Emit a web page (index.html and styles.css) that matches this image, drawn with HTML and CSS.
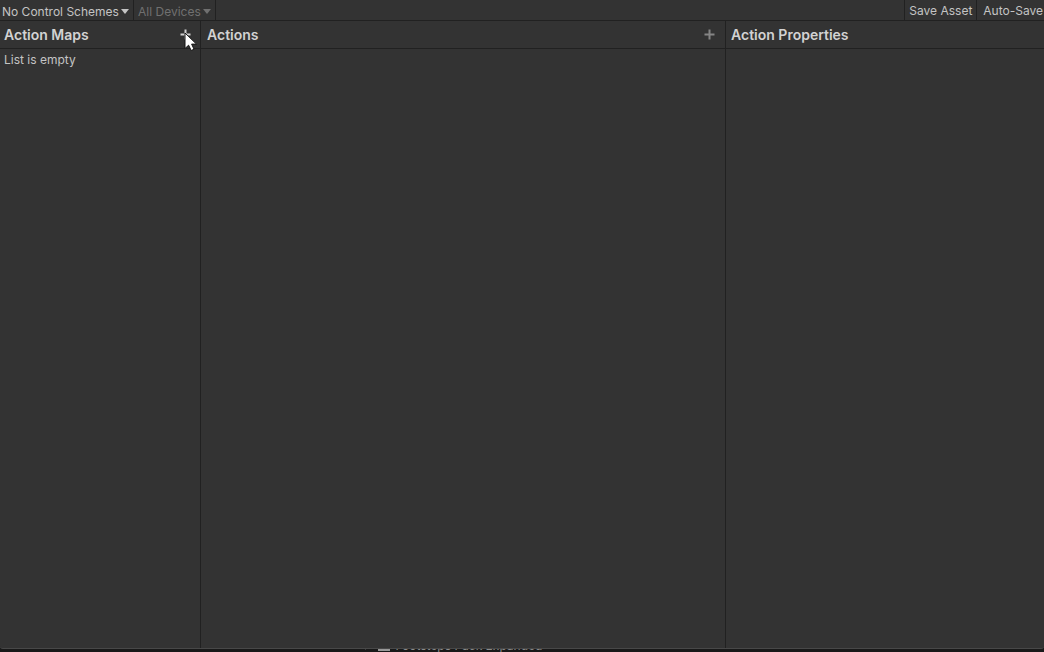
FILE: index.html
```html
<!DOCTYPE html>
<html lang="en">
<head>
<meta charset="utf-8">
<title>Input Actions</title>
<link rel="stylesheet" href="styles.css">
</head>
<body>
<div class="app">
  <main class="window">
    <div class="toolbar">
      <div class="picker picker-schemes">
        <select class="picker-select" aria-label="Control scheme"><option>No Control Schemes</option></select>
        <svg class="caret" viewBox="0 0 8 5" aria-hidden="true"><path d="M0 0h8L4 5z"/></svg>
      </div>
      <div class="picker picker-devices">
        <select class="picker-select" aria-label="Devices" disabled><option>All Devices</option></select>
        <svg class="caret" viewBox="0 0 8 5" aria-hidden="true"><path d="M0 0h8L4 5z"/></svg>
      </div>
      <div class="spacer"></div>
      <button class="tool-button" type="button">Save Asset</button>
      <button class="tool-button tool-autosave" type="button" aria-pressed="false">Auto-Save</button>
    </div>
    <div class="columns">
      <section class="column">
        <header class="column-header">
          <h2 class="column-title">Action Maps</h2>
          <button class="add-button add-active" type="button" aria-label="Add action map">
            <svg class="plus" viewBox="0 0 11 11" aria-hidden="true"><path d="M5.5 0.5v10M0.5 5.5h10"/></svg>
            <svg class="cursor" viewBox="0 0 14 20" aria-hidden="true"><path d="M1 1v15.5l3.6-3.3 2.6 5.3 2.8-1.3-2.4-5.1h4.9z"/></svg>
          </button>
        </header>
        <p class="empty">List is empty</p>
      </section>
      <section class="column column-actions">
        <header class="column-header">
          <h2 class="column-title">Actions</h2>
          <button class="add-button" type="button" aria-label="Add action">
            <svg class="plus" viewBox="0 0 11 11" aria-hidden="true"><path d="M5.5 0.5v10M0.5 5.5h10"/></svg>
          </button>
        </header>
      </section>
      <section class="column column-properties">
        <header class="column-header">
          <h2 class="column-title">Action Properties</h2>
        </header>
      </section>
    </div>
  </main>
  <div class="behind">
    <div class="behind-row">
      <svg class="fold" viewBox="0 0 5 8" aria-hidden="true"><path d="M0 0l5 4-5 4z"/></svg>
      <span class="folder"></span>
      <span>Footsteps Pack Expanded</span>
    </div>
  </div>
</div>
</body>
</html>
```
FILE: styles.css
```css
* { box-sizing: border-box; }
body {
  margin: 0;
  background: #191919;
  color: #c4c4c4;
  font: 12px/16px Inter, "Liberation Sans", sans-serif;
}
.app {
  display: flex;
  flex-direction: column;
  height: 100vh;
  overflow: hidden;
}
.window {
  flex: 1;
  min-height: 0;
  display: flex;
  flex-direction: column;
  background: #333333;
  border-bottom: 1px solid #484848;
  border-radius: 0 0 3px 3px;
}
.toolbar {
  display: flex;
  height: 21px;
  border-bottom: 1px solid #212121;
  overflow: hidden;
}
.picker {
  display: flex;
  position: relative;
  border-right: 1px solid #212121;
}
.picker-schemes { width: 134px; }
.picker-devices { width: 82px; color: #707070; }
.picker-select {
  appearance: none;
  width: 100%;
  margin: 0;
  padding: 2px 0 0 2px;
  border: 0;
  background: none;
  color: inherit;
  font: inherit;
  line-height: 20px;
  opacity: 1;
}
.picker-devices .picker-select { padding-left: 4px; }
.caret {
  position: absolute;
  right: 4px;
  top: 9px;
  width: 8px;
  height: 5px;
  fill: currentColor;
  pointer-events: none;
}
.spacer { flex: 1; }
.tool-button {
  flex: none;
  padding: 1px 4px 0;
  border: 0;
  border-left: 1px solid #212121;
  background: none;
  color: inherit;
  font: inherit;
  white-space: nowrap;
}
.tool-autosave { padding: 2px 1px 0 6px; }
.columns {
  flex: 1;
  display: grid;
  grid-template-columns: 200px 525fr 319fr;
}
.column { min-width: 0; }
.column + .column { border-left: 1px solid #212121; }
.column-header {
  display: flex;
  align-items: center;
  justify-content: space-between;
  height: 28px;
  padding: 0 10px 0 4px;
  border-bottom: 1px solid #212121;
}
.column:first-child .column-header { padding-right: 9px; }
.column-actions .column-header { padding-left: 6px; }
.column-properties .column-header { padding-left: 5px; }
.column-title {
  margin: 0;
  color: #d2d2d2;
  font-size: 14px;
  font-weight: 600;
  line-height: 20px;
}
.add-button {
  display: flex;
  position: relative;
  padding: 0;
  border: 0;
  background: none;
  color: #858585;
}
.add-active { color: #d2d2d2; }
.plus {
  width: 11px;
  height: 11px;
  fill: none;
  stroke: currentColor;
  stroke-width: 2;
}
.cursor {
  position: absolute;
  left: 4px;
  top: 3px;
  width: 14px;
  height: 20px;
  fill: #ffffff;
  stroke: #151515;
  pointer-events: none;
}
.empty {
  margin: 0;
  padding: 3px 4px;
}
.behind {
  height: 3px;
  overflow: hidden;
  padding-left: 35%;
  background: #191919;
  color: #8c8c8c;
}
.behind-row {
  display: flex;
  align-items: center;
  height: 16px;
  margin-top: -11px;
}
.fold {
  width: 5px;
  height: 8px;
  margin-right: 8px;
  fill: #555555;
}
.folder {
  width: 12px;
  height: 9px;
  margin: 1px 5px 0 0;
  background: #999999;
}
```
